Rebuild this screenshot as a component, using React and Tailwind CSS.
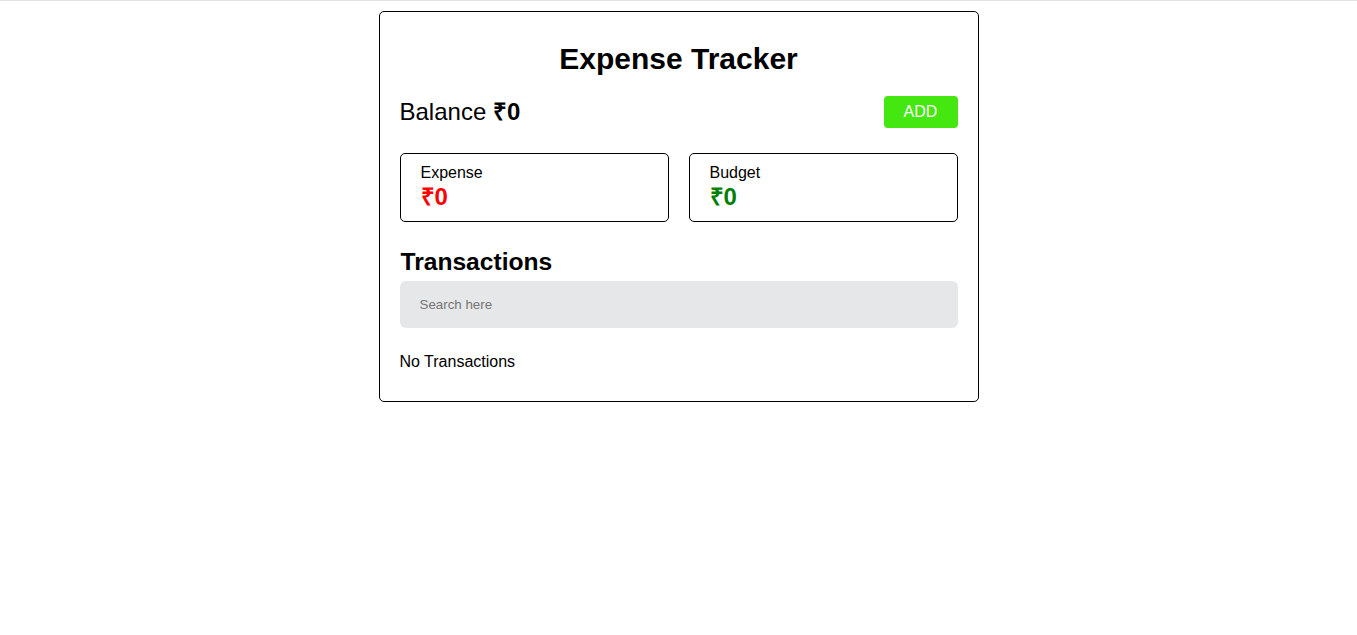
export default function App() {
  return (
    <div className="min-h-screen bg-white border-t border-[#e3e3e3] font-['Liberation_Sans',Arial,sans-serif] text-black">
      <div className="w-[600px] mx-auto mt-[10px] border border-black rounded-[5px] px-5 pt-[29px] pb-[27px]">
        <h1 className="text-[30px] leading-9 font-bold text-center">Expense Tracker</h1>

        <div className="flex items-center justify-between mt-[19px]">
          <div className="text-2xl">
            Balance <span className="font-bold">₹0</span>
          </div>
          <button className="w-[74px] h-8 bg-[#44e70f] text-white text-base rounded-[4px]">ADD</button>
        </div>

        <div className="grid grid-cols-2 gap-5 mt-[25px]">
          <div className="border border-black rounded-[5px] h-[69px] px-5 pt-[9px]">
            <div className="text-base leading-5">Expense</div>
            <div className="text-2xl leading-7 font-bold text-[#ff0000]">₹0</div>
          </div>
          <div className="border border-black rounded-[5px] h-[69px] px-5 pt-[9px]">
            <div className="text-base leading-5">Budget</div>
            <div className="text-2xl leading-7 font-bold text-[#008000]">₹0</div>
          </div>
        </div>

        <h2 className="text-[24.6px] leading-7 font-bold mt-[26px] pl-px">Transactions</h2>
        <input
          type="text"
          placeholder="Search here"
          className="block w-full h-[47px] mt-[5px] bg-[#e6e7e9] rounded-[6px] px-5 text-[13.33px] outline-none placeholder:text-[#757575]"
        />

        <p className="text-base mt-[22px]">No Transactions</p>
      </div>
    </div>
  );
}
